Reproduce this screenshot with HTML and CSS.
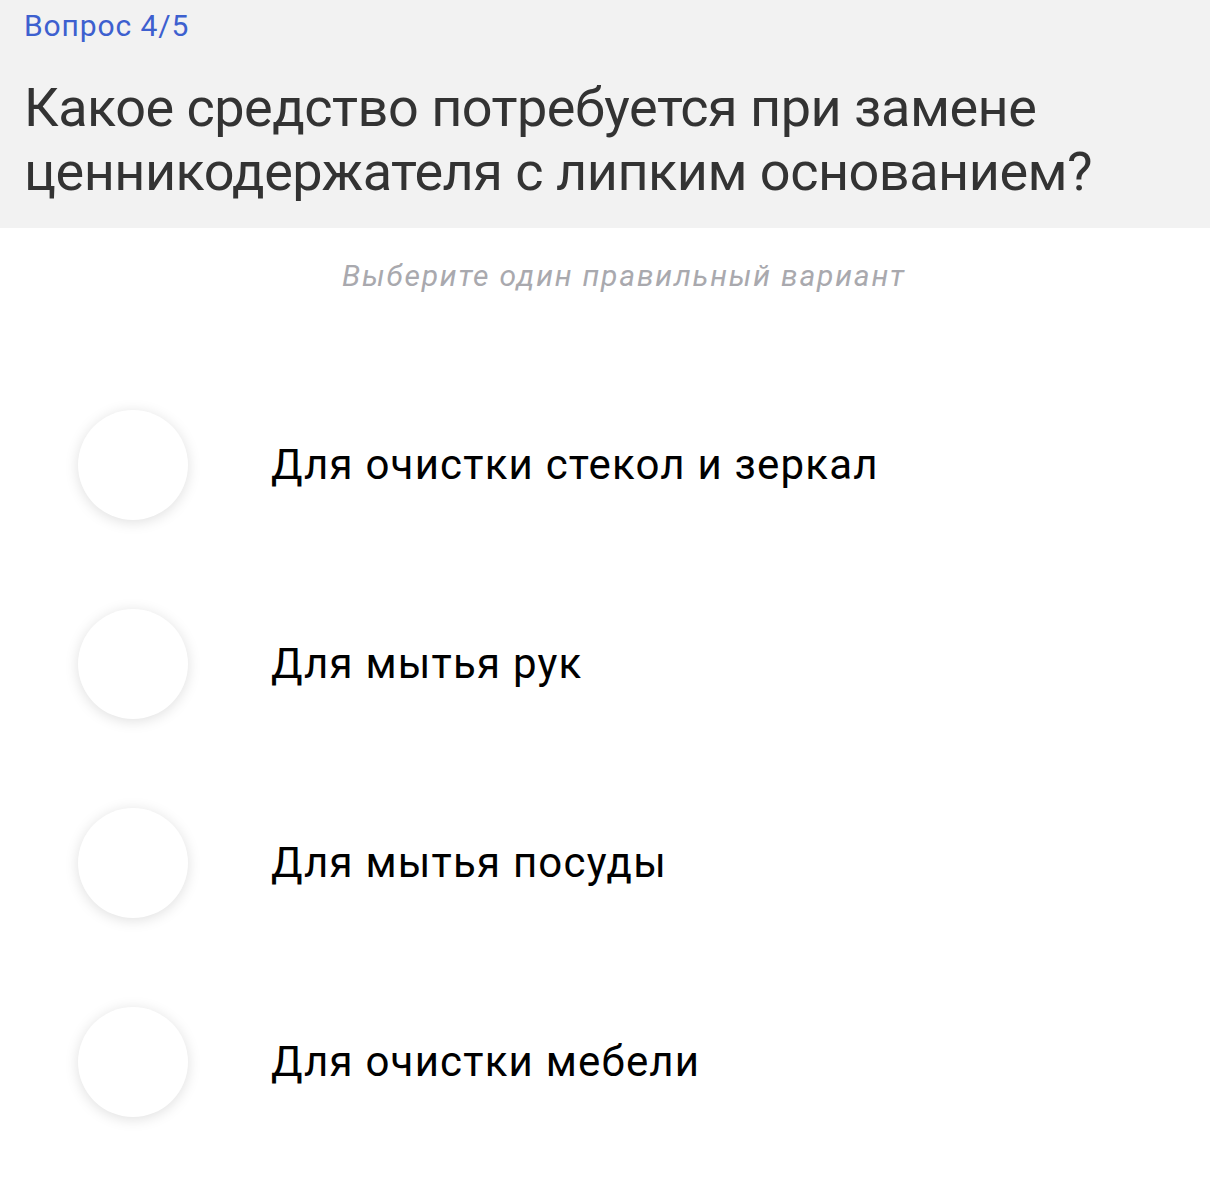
FILE: index.html
```html
<!DOCTYPE html>
<html lang="ru">
<head>
    <meta charset="UTF-8">
    <meta name="viewport" content="width=device-width, initial-scale=1.0">
    <title>Вопрос 4/5</title>
    <link rel="stylesheet" href="styles.css">
</head>
<body>
    <div class="question-header">
        <div class="question-count">Вопрос 4/5</div>
        <h1 class="question-title">Какое средство потребуется при замене ценникодержателя с липким основанием?</h1>
    </div>
    <p class="hint">Выберите один правильный вариант</p>
    <div class="answers">
        <label class="answer">
            <span class="radio"></span>
            <span class="answer-text">Для очистки стекол и зеркал</span>
        </label>
        <label class="answer">
            <span class="radio"></span>
            <span class="answer-text">Для мытья рук</span>
        </label>
        <label class="answer">
            <span class="radio"></span>
            <span class="answer-text">Для мытья посуды</span>
        </label>
        <label class="answer">
            <span class="radio"></span>
            <span class="answer-text">Для очистки мебели</span>
        </label>
    </div>
</body>
</html>
```

FILE: styles.css
```css
body {
    font-family: Roboto, 'Noto Sans', sans-serif;
    background: #fff;
    margin: 0;
}
.question-header {
    background: #f2f2f2;
    padding: 8px 24px 24px;
}
.question-count {
    font-size: 30px;
    line-height: 36px;
    letter-spacing: 0.9px;
    color: #3d60cf;
}
.question-title {
    margin: 32px 0 0;
    font-size: 54px;
    line-height: 64px;
    letter-spacing: -0.5px;
    font-weight: 400;
    color: #333;
}
.hint {
    margin: 30px 0 0;
    padding-left: 38px;
    text-align: center;
    font-size: 30px;
    line-height: 36px;
    letter-spacing: 1.8px;
    font-style: italic;
    color: #a9a9ae;
}
.answers {
    margin-top: 71px;
    padding-left: 78px;
}
.answer {
    display: flex;
    align-items: center;
    height: 199px;
    cursor: pointer;
}
.radio {
    width: 110px;
    height: 110px;
    border-radius: 50%;
    background: #fff;
    box-shadow: 0 2px 14px rgba(0, 0, 0, 0.13);
    flex-shrink: 0;
}
.answer-text {
    margin-left: 83px;
    font-size: 42px;
    letter-spacing: 1.2px;
    color: #000;
}
```
